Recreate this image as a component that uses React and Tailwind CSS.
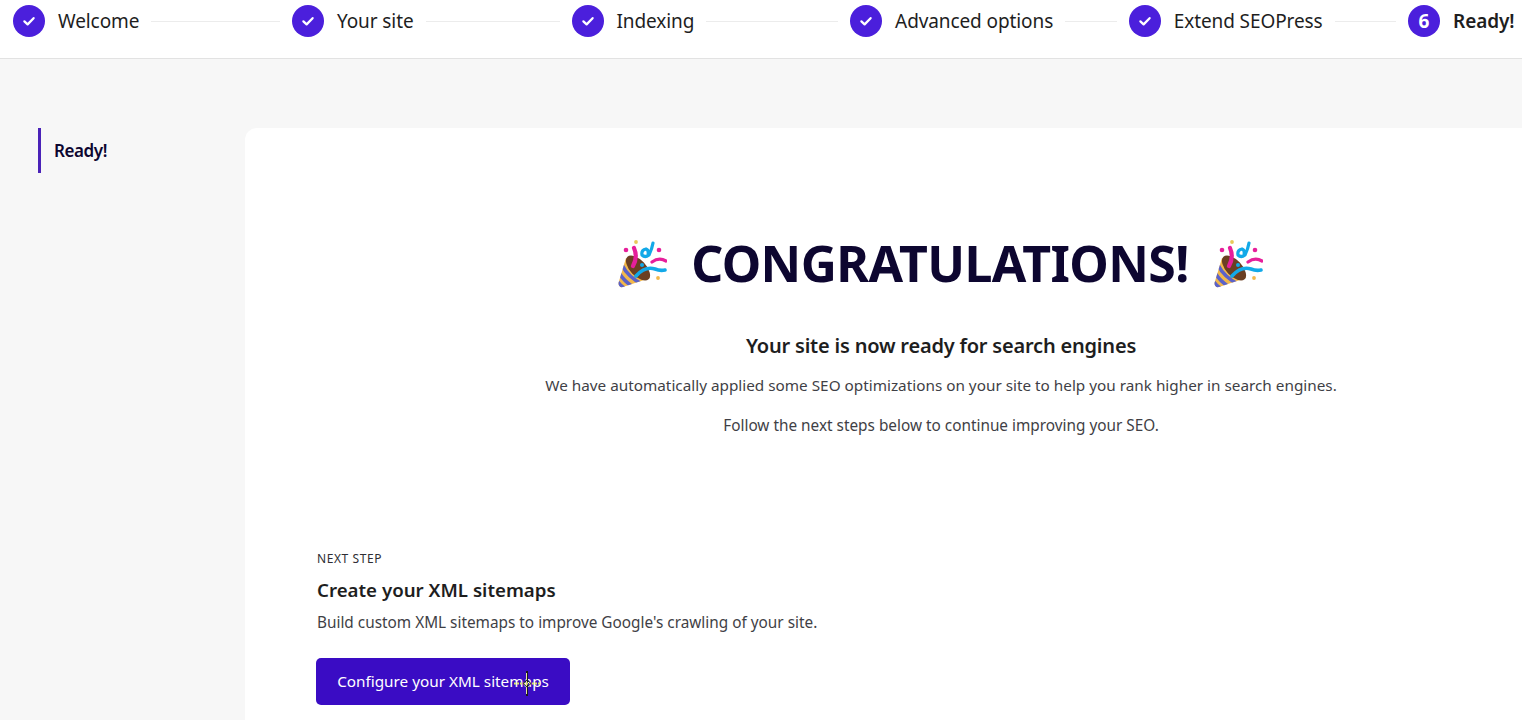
const font = { fontFamily: '"Noto Sans", sans-serif' };

function Check() {
  return (
    <svg width="14" height="14" viewBox="0 0 14 14" fill="none">
      <path d="M2.4 7.4 L5.6 10.4 L11.6 4.2" stroke="#fff" strokeWidth="2.3" strokeLinecap="round" strokeLinejoin="round" />
    </svg>
  );
}

function Step({ label, n, active }) {
  return (
    <div className="flex items-center shrink-0">
      <span className="flex h-8 w-8 items-center justify-center rounded-full bg-[#4b1fdc] text-[19px] font-bold text-white">
        {n ? n : <Check />}
      </span>
      <span className={`ml-[13px] text-[19px] tracking-[-0.1px] text-[#1e1e1e] ${active ? "font-semibold" : ""}`}>{label}</span>
    </div>
  );
}

function Line({ w }) {
  return <span className={`mx-3 h-px bg-[#ececec] ${w}`} />;
}

function Party() {
  return (
    <svg width="50" height="50" viewBox="0 0 50 50" className="shrink-0">
      <defs>
        <clipPath id="cone">
          <path d="M9 20 L1.5 45 Q1.5 50 6 49 L33 40 Z" />
        </clipPath>
      </defs>
      <path d="M9 20 L1.5 45 Q1.5 50 6 49 L33 40 Z" fill="#f2b84b" />
      <g clipPath="url(#cone)" fill="none" stroke="#5b62c9" strokeWidth="3.6">
        <path d="M5 27 Q11 39 25 46" />
        <path d="M2 35 Q7 43 16 49" />
        <path d="M0 43 Q3 47 7 50" />
      </g>
      <ellipse cx="21" cy="30" rx="15.5" ry="8" transform="rotate(47 21 30)" fill="#6b3f22" />
      <path d="M17 10 Q21 19 16 28" fill="none" stroke="#e61f9b" strokeWidth="4.2" strokeLinecap="round" />
      <path d="M19 38 Q28 28 38 31 Q43 33 48 32" fill="none" stroke="#12a9e8" strokeWidth="3.6" strokeLinecap="round" />
      <path d="M35 24 Q42 19 49 23" fill="none" stroke="#e61f9b" strokeWidth="3.2" strokeLinecap="round" />
      <path d="M36 5 Q35 11 32 17 Q28 20 25 17 Q24 12 29 11 Q32 12 31 17" fill="none" stroke="#12a9e8" strokeWidth="3.2" strokeLinecap="round" />
      <circle cx="9" cy="12" r="2.3" fill="#e61f9b" />
      <circle cx="42" cy="12" r="2.3" fill="#e61f9b" />
      <circle cx="19" cy="4" r="1.9" fill="#e8c95a" />
      <circle cx="41" cy="40" r="1.9" fill="#f2b84b" />
      <circle cx="25" cy="27" r="2" fill="#12a9e8" />
    </svg>
  );
}

function Cursor() {
  return (
    <svg width="28" height="26" viewBox="0 0 28 26" className="absolute left-[197px] top-[13px]">
      <rect x="13" y="0" width="2" height="25" fill="#1a1a1a" />
      <rect x="13" y="2" width="1" height="21" fill="#e8e6a0" />
      <path d="M1 12.5 H27" stroke="#d8e46a" strokeWidth="2" strokeDasharray="2 1" />
      <path d="M10 12.5 L14 9 L18 12.5 L14 16 Z" fill="none" stroke="#222" strokeWidth="1" />
    </svg>
  );
}

export default function App() {
  return (
    <div style={font} className="h-[720px] w-[1522px] overflow-hidden bg-[#f7f7f7]">
      <header className="flex h-[59px] w-[1600px] items-start border-b border-[#e2e2e2] bg-white pl-[13px] pt-[5px]">
        <div className="flex h-8 items-center">
          <Step label="Welcome" />
          <Line w="w-[128.7px]" />
          <Step label="Your site" />
          <Line w="w-[134px]" />
          <Step label="Indexing" />
          <Line w="w-[131.8px]" />
          <Step label="Advanced options" />
          <Line w="w-[51.6px]" />
          <Step label="Extend SEOPress" />
          <Line w="w-[61.5px]" />
          <Step label="Ready!" n="6" active />
        </div>
      </header>

      <div className="flex pt-[69px]">
        <aside className="ml-[38px] w-[207px] shrink-0">
          <div className="flex h-[45px] items-center border-l-[3px] border-[#4a22b8] pl-[13px] text-[17px] font-semibold tracking-[-0.4px] text-[#0d0630]">
            Ready!
          </div>
        </aside>

        <main className="h-[700px] w-[1392px] shrink-0 rounded-tl-xl bg-white">
          <div className="flex flex-col items-center pt-[105px]">
            <div className="mr-[2px] flex items-center gap-[24px]">
              <Party />
              <h1 className="text-[50px] font-bold leading-[60px] tracking-[-0.6px] text-[#0d0630]">CONGRATULATIONS!</h1>
              <Party />
            </div>
            <h2 className="mt-[39px] text-[20px] font-semibold leading-[28px] tracking-[-0.2px] text-[#1e1e1e]">
              Your site is now ready for search engines
            </h2>
            <p className="mt-[14px] text-[15.3px] leading-[22px] text-[#3f3f46]">
              We have automatically applied some SEO optimizations on your site to help you rank higher in search engines.
            </p>
            <p className="mt-[18px] text-[15.35px] leading-[22px] text-[#3f3f46]">
              Follow the next steps below to continue improving your SEO.
            </p>
          </div>

          <div className="pl-[72px] pt-[115px]">
            <div className="text-[12px] uppercase leading-[16px] tracking-[0.6px] text-[#2e2e33]">Next step</div>
            <h3 className="mt-[10px] text-[18.7px] font-semibold leading-[26px] text-[#1e1e1e]">Create your XML sitemaps</h3>
            <p className="mt-[8px] text-[15.35px] leading-[22px] text-[#3f3f46]">
              Build custom XML sitemaps to improve Google's crawling of your site.
            </p>
            <button className="relative -ml-px mt-[25px] flex h-[47px] w-[254px] items-center justify-center rounded-[5px] bg-[#3a0cc4] text-[15.3px] text-white">
              Configure your XML sitemaps
              <Cursor />
            </button>
          </div>
        </main>
      </div>
    </div>
  );
}
